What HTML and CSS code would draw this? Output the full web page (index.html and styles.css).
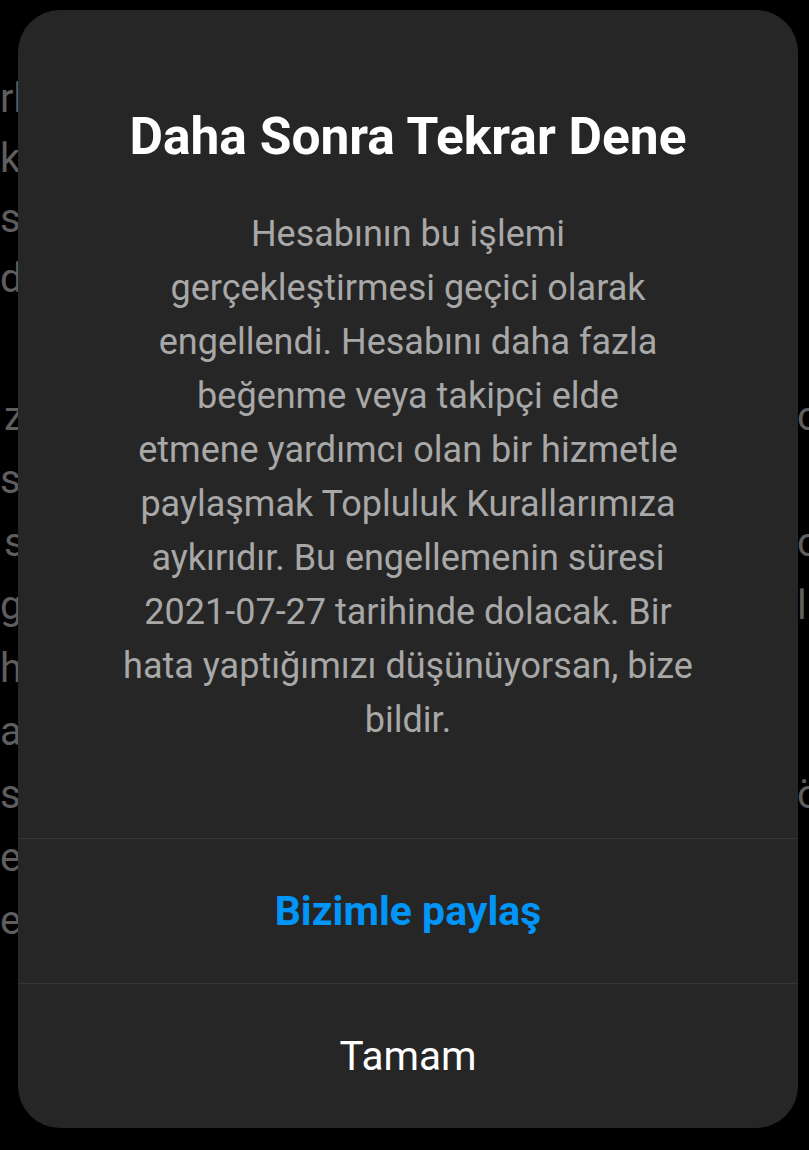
FILE: index.html
```html
<!DOCTYPE html>
<html lang="tr">
<head>
<meta charset="utf-8">
<title>Daha Sonra Tekrar Dene</title>
<link rel="stylesheet" href="styles.css">
</head>
<body>
<div class="page">
  <div class="bg">
    <div class="para p1">
      <div class="line"><span class="l">rk</span><span class="r"></span></div>
      <div class="line"><span class="l">kl</span><span class="r"></span></div>
      <div class="line"><span class="l">sy</span><span class="r"></span></div>
      <div class="line"><span class="l">do</span><span class="r"></span></div>
    </div>
    <div class="para p2">
      <div class="line"><span class="l">&#8202;z</span><span class="r">c</span></div>
      <div class="line"><span class="l">st</span><span class="r"></span></div>
      <div class="line"><span class="l">&#8202;s</span><span class="r">c</span></div>
      <div class="line"><span class="l">g</span><span class="r">l</span></div>
      <div class="line"><span class="l">hi</span><span class="r"></span></div>
      <div class="line"><span class="l">a</span><span class="r"></span></div>
      <div class="line"><span class="l">si</span><span class="r">ö</span></div>
      <div class="line"><span class="l">er</span><span class="r"></span></div>
      <div class="line"><span class="l">e</span><span class="r"></span></div>
    </div>
  </div>

  <div class="dialog">
    <div class="content">
      <h1 class="title">Daha Sonra Tekrar Dene</h1>
      <p class="message">Hesabının bu işlemi<br>gerçekleştirmesi geçici olarak<br>engellendi. Hesabını daha fazla<br>beğenme veya takipçi elde<br>etmene yardımcı olan bir hizmetle<br>paylaşmak Topluluk Kurallarımıza<br>aykırıdır. Bu engellemenin süresi<br>2021-07-27 tarihinde dolacak. Bir<br>hata yaptığımızı düşünüyorsan, bize<br>bildir.</p>
    </div>
    <div class="btn btn-primary">Bizimle paylaş</div>
    <div class="btn btn-plain">Tamam</div>
  </div>
</div>
</body>
</html>
```
FILE: styles.css
```css
html, body {
  margin: 0;
  padding: 0;
  background: #000;
}
body {
  font-family: Roboto, "Noto Sans", "Liberation Sans", sans-serif;
  width: 809px;
  height: 1150px;
  overflow: hidden;
}
.page {
  position: relative;
  width: 809px;
  height: 1150px;
}
.bg {
  color: #5e5e5e;
  font-size: 40px;
  padding-top: 69px;
}
.para.p1 .line { line-height: 60px; }
.para.p2 { margin-top: 76px; }
.para.p2 .line { line-height: 63px; }
.line {
  display: flex;
  justify-content: space-between;
  white-space: nowrap;
}
.line .r {
  width: 12px;
}

.dialog {
  position: absolute;
  left: 18px;
  top: 10px;
  width: 780px;
  height: 1118px;
  background: #262626;
  border-radius: 42px;
  display: flex;
  flex-direction: column;
  overflow: hidden;
}
.content {
  height: 828px;
  box-sizing: border-box;
  padding-top: 97px;
  text-align: center;
}
.title {
  margin: 0;
  color: #fff;
  font-size: 51.5px;
  font-weight: 700;
  line-height: 60px;
}
.message {
  margin: 40px 0 0;
  color: #a8a8a8;
  font-size: 36px;
  line-height: 54px;
}
.btn {
  flex: 1;
  display: flex;
  align-items: center;
  justify-content: center;
  border-top: 1px solid #363636;
}
.btn-primary {
  color: #0095f6;
  font-weight: 700;
  font-size: 41px;
}
.btn-plain {
  color: #fff;
  font-size: 40.5px;
}
```
